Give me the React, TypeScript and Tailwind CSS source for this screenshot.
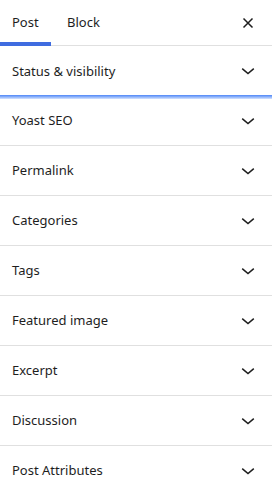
import React from "react";

const Chevron = () => (
  <svg width="24" height="24" viewBox="0 0 24 24" fill="none">
    <path d="M6.2 9.6 L12 14.6 L17.8 9.6" stroke="#1e1e1e" strokeWidth="1.5" />
  </svg>
);

const Close = () => (
  <svg width="24" height="24" viewBox="0 0 24 24" fill="none">
    <path d="M7.5 7.5 L16.5 16.5 M16.5 7.5 L7.5 16.5" stroke="#1e1e1e" strokeWidth="1.5" />
  </svg>
);

const rows = [
  "Yoast SEO",
  "Permalink",
  "Categories",
  "Tags",
  "Featured image",
  "Excerpt",
  "Discussion",
  "Post Attributes",
];

export default function App() {
  return (
    <div
      className="w-[272px] h-[486px] overflow-hidden bg-white text-[#1e1e1e] text-[13px]"
      style={{ fontFamily: '"Noto Sans", "Open Sans", sans-serif' }}
    >
      <div className="flex h-[46px] border-b border-[#e0e0e0] items-stretch">
        <div className="relative w-[51px] pl-3 pt-px flex items-center">
          Post
          <div className="absolute left-0 right-0 bottom-[-1px] h-[4px] bg-[#3f6ce0]" />
        </div>
        <div className="pl-4 pt-px flex items-center">Block</div>
        <div className="ml-auto pr-3 flex items-center">
          <Close />
        </div>
      </div>
      <div className="relative h-[50px] flex items-center justify-between px-3">
        <span className="pt-px">Status &amp; visibility</span>
        <Chevron />
        <div className="absolute left-0 right-0 top-[49px] h-[4px] z-10 bg-[linear-gradient(to_bottom,#4f86f7,#8fb4fb,#d6e4fe)]" />
      </div>
      {rows.map((r) => (
        <div
          key={r}
          className="h-[50px] flex items-center justify-between px-3 border-b border-[#e0e0e0]"
        >
          <span className="pt-px">{r}</span>
          <Chevron />
        </div>
      ))}
    </div>
  );
}
